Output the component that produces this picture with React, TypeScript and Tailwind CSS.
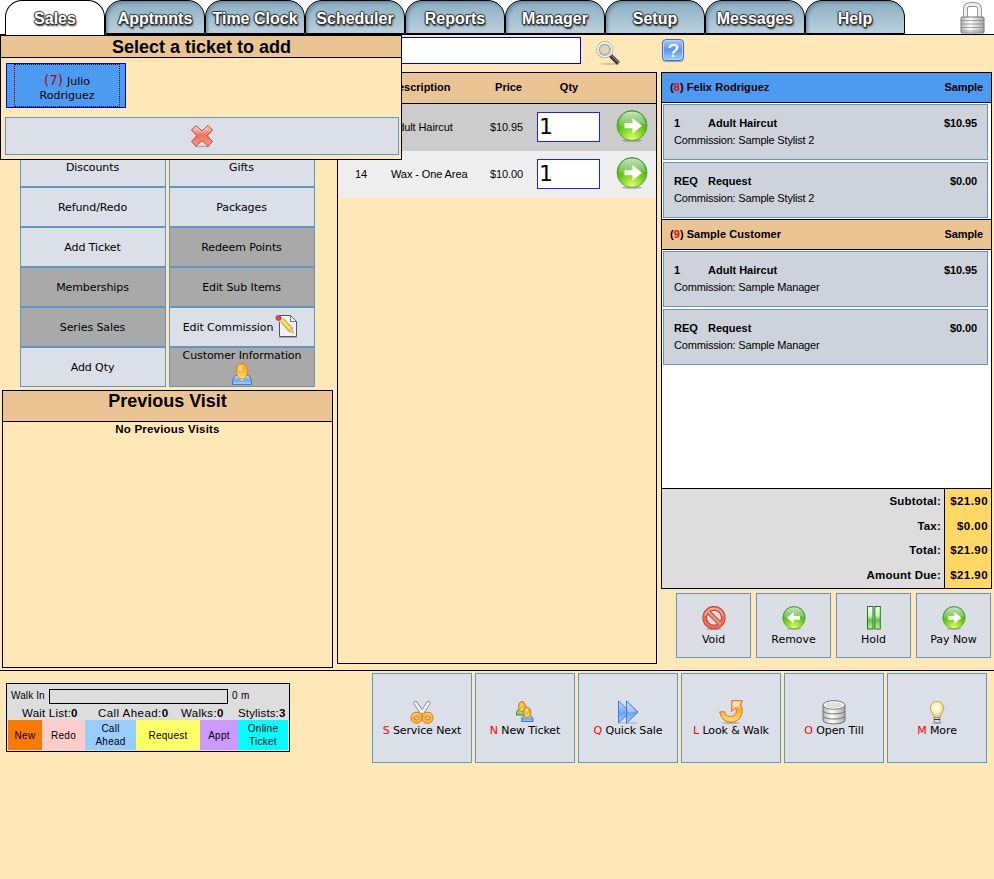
import React from "react";

const SANS = "font-['Liberation_Sans',Arial,sans-serif]";
const DEJA = "font-['DejaVu_Sans',Verdana,sans-serif]";

function Defs() {
  return (
    <svg width="0" height="0" className="absolute">
      <defs>
        <radialGradient id="green" cx="50%" cy="95%" r="85%">
          <stop offset="0" stopColor="#e2ff70" />
          <stop offset="0.45" stopColor="#7ed61f" />
          <stop offset="1" stopColor="#2f9a12" />
        </radialGradient>
        <linearGradient id="gloss" x1="0" y1="0" x2="0" y2="1">
          <stop offset="0" stopColor="#fff" stopOpacity="0.75" />
          <stop offset="1" stopColor="#fff" stopOpacity="0.15" />
        </linearGradient>
        <linearGradient id="red" x1="0" y1="0" x2="0" y2="1">
          <stop offset="0" stopColor="#fbd3c8" />
          <stop offset="0.5" stopColor="#f0705a" />
          <stop offset="1" stopColor="#f8a08c" />
        </linearGradient>
        <linearGradient id="orange" x1="0" y1="0" x2="0" y2="1">
          <stop offset="0" stopColor="#ff9d1c" />
          <stop offset="0.5" stopColor="#ffb52e" />
          <stop offset="1" stopColor="#ffe873" />
        </linearGradient>
        <linearGradient id="blue" x1="0" y1="0" x2="0" y2="1">
          <stop offset="0" stopColor="#cfe2ff" />
          <stop offset="0.55" stopColor="#6fa3f2" />
          <stop offset="1" stopColor="#a9d0ff" />
        </linearGradient>
        <linearGradient id="grey" x1="0" y1="0" x2="1" y2="0">
          <stop offset="0" stopColor="#b5b5b5" />
          <stop offset="0.4" stopColor="#ffffff" />
          <stop offset="1" stopColor="#a8a8a8" />
        </linearGradient>
        <linearGradient id="pausebar" x1="0" y1="0" x2="0" y2="1">
          <stop offset="0" stopColor="#f4fff0" />
          <stop offset="0.4" stopColor="#d2f2c0" />
          <stop offset="0.6" stopColor="#6cc448" />
          <stop offset="1" stopColor="#c2f080" />
        </linearGradient>
        <radialGradient id="bulb" cx="45%" cy="40%" r="60%">
          <stop offset="0" stopColor="#ffffff" />
          <stop offset="0.5" stopColor="#fdf0bc" />
          <stop offset="1" stopColor="#dfc06c" />
        </radialGradient>
      </defs>
    </svg>
  );
}

type IconProps = { className?: string };

function ArrowBall({ className = "size-6", left = false }: IconProps & { left?: boolean }) {
  return (
    <svg viewBox="0 0 32 32" className={className}>
      <ellipse cx="16" cy="30.5" rx="10" ry="1.3" fill="#000" opacity="0.25" />
      <circle cx="16" cy="15.5" r="15" fill="url(#green)" stroke="#4c9a35" strokeWidth="0.8" />
      <path d="M2.5 15C2.5 6 9 1.6 16 1.6S29.500 6 29.500 15C24 12.500 20 14 16 15S7 17.500 2.500 15Z" fill="url(#gloss)" />
      <path
        d="M8.500 13.300h8V8l9.500 7.800-9.500 7.900v-5.400h-8z"
        fill="#fff"
        transform={left ? "translate(32.5 0) scale(-1 1)" : undefined}
      />
    </svg>
  );
}

function CrossIcon() {
  return (
    <svg viewBox="0 0 24 24" className="size-6">
      <path d="M5 22.500h14" stroke="#777" strokeWidth="1.200" opacity="0.5" />
      <path d="M6 1.500 12 7l6-5.500L22.500 6 17.200 11.700 22.500 17.500 18 22.200 12 16.500 6 22.200 1.500 17.500 6.800 11.700 1.500 6z" fill="url(#red)" stroke="#c9402c" strokeWidth="1" strokeLinejoin="round" />
      <path d="M6 3 12 8.600 18 3" stroke="#fff" strokeWidth="0.8" fill="none" opacity="0.8" />
    </svg>
  );
}

function SearchIcon() {
  return (
    <svg viewBox="0 0 24 24" className="size-6">
      <ellipse cx="13" cy="23" rx="9" ry="0.9" fill="#000" opacity="0.15" />
      <path d="M14.500 14.500l8 8" stroke="#3c3c3c" strokeWidth="4" />
      <path d="M14.500 13.500l8.500 8.500" stroke="#999" strokeWidth="1" />
      <circle cx="8.700" cy="8.700" r="7" fill="#dcd6b8" stroke="#8c8c8c" strokeWidth="3" />
      <circle cx="8.700" cy="8.700" r="7" fill="none" stroke="#efefef" strokeWidth="2" />
      <circle cx="8.700" cy="8.700" r="5" fill="none" stroke="#a0a0a0" strokeWidth="0.800" />
    </svg>
  );
}

function HelpIcon() {
  return (
    <div className={`${SANS} flex h-[22px] w-[22px] items-center justify-center rounded-[4px] border border-[#4371cf] bg-linear-to-b from-[#a9c7fb] via-[#5d92f0] to-[#9bd0ff] text-[19px] leading-none text-white shadow-[inset_0_0_0_1px_#b5d3ff,0_1px_1px_#9b9b8b] [text-shadow:0.5px_0_0_#fff]`}>
      ?
    </div>
  );
}

function LockIcon() {
  return (
    <svg viewBox="0 0 25 32" className="h-8 w-[25px]">
      <path d="M5.500 16V7q0-4.500 4.500-4.500h4.500Q19.500 2.500 19.500 7v9" fill="none" stroke="#777" strokeWidth="4.500" />
      <path d="M5.500 16V7q0-4.500 4.500-4.500h4.500Q19.500 2.500 19.500 7v9" fill="none" stroke="#eee" strokeWidth="3" />
      <rect x="1" y="15" width="23" height="16" rx="1" fill="url(#grey)" stroke="#777" />
      <path d="M1.500 18.500h22M1.500 22h22M1.500 25.500h22M1.500 29h22" stroke="#777" strokeWidth="0.900" opacity="0.7" />
    </svg>
  );
}

function EditIcon() {
  return (
    <svg viewBox="0 0 24 26" className="h-[26px] w-6">
      <path d="M4.500 2.500h11l6 6v15h-17z" fill="#f2f2f2" stroke="#555" />
      <path d="M15.500 2.500v6h6z" fill="#fff" stroke="#555" strokeWidth="0.8" />
      <path d="M4 24.500h18" stroke="#888" opacity="0.6" />
      <path d="M5 8 8 5l9.500 10-3.500 3.500z" fill="#fcc52b" stroke="#b5862a" strokeWidth="0.7" />
      <path d="M6.500 6.500l9.500 10" stroke="#fff09a" strokeWidth="1.200" />
      <path d="M14 18.500l3.500-3.500 .8 5z" fill="#f5d6b8" stroke="#b08560" strokeWidth="0.6" />
      <path d="M4 8.500 8 4.800" stroke="#d8d8d8" strokeWidth="2" />
      <circle cx="3.500" cy="4.900" r="2.700" fill="#d84850" stroke="#a92a30" strokeWidth="0.5" />
    </svg>
  );
}

function PersonIcon() {
  return (
    <svg viewBox="0 0 22 24" className="h-6 w-[22px] shrink-0">
      <path d="M1.500 22.500Q1 14 6 13h10q5 1 4.500 9.500z" fill="url(#blue)" stroke="#3f78cc" />
      <path d="M6 14l5 5 5-5" fill="#dce9ff" />
      <ellipse cx="11" cy="9" rx="5.800" ry="7.900" fill="url(#orange)" stroke="#d98a14" />
      <ellipse cx="9.500" cy="6" rx="2.500" ry="3" fill="#fff" opacity="0.4" />
    </svg>
  );
}

function VoidIcon() {
  return (
    <svg viewBox="0 0 24 24" className="size-6">
      <ellipse cx="12" cy="23" rx="8" ry="0.900" fill="#000" opacity="0.25" />
      <circle cx="12" cy="11.700" r="9.300" fill="none" stroke="#b33420" strokeWidth="4.600" />
      <path d="M5.500 5.200l13 13" stroke="#b33420" strokeWidth="4.600" />
      <circle cx="12" cy="11.700" r="9.300" fill="none" stroke="#ee6a52" strokeWidth="3.200" />
      <path d="M5.500 5.200l13 13" stroke="#f28a76" strokeWidth="3.200" />
      <path d="M3 9.500A9.300 9.300 0 0 1 21 9.500" fill="none" stroke="#f9b9aa" strokeWidth="1.500" />
    </svg>
  );
}

function PauseIcon() {
  return (
    <svg viewBox="0 0 24 24" className="size-6">
      <rect x="5.500" y="0.500" width="5.500" height="22.500" fill="url(#pausebar)" stroke="#1f7a28" />
      <rect x="12.800" y="0.500" width="5.500" height="22.500" fill="url(#pausebar)" stroke="#1f7a28" />
    </svg>
  );
}

function ScissorsIcon() {
  return (
    <svg viewBox="0 0 24 24" className="size-6">
      <path d="M5.500 3 12.800 14M18.500 3 11.200 14" stroke="#888" strokeWidth="4.200" strokeLinecap="round" />
      <path d="M5.500 3 12.800 14M18.500 3 11.200 14" stroke="#f4f4f4" strokeWidth="2.600" strokeLinecap="round" />
      <rect x="1" y="12.300" width="11" height="11" rx="5" fill="#ffb240" stroke="#e08214" />
      <rect x="12" y="12.300" width="11" height="11" rx="5" fill="#ffb240" stroke="#e08214" />
      <path d="M3 15.500q3-3 6-1.500M15 14q3-1.500 6 1.500" stroke="#ffdc9c" strokeWidth="1.200" fill="none" />
      <ellipse cx="6.500" cy="18.300" rx="2.300" ry="1.500" fill="#dbdfe7" stroke="#d97a10" strokeWidth="0.900" />
      <ellipse cx="17.500" cy="18.300" rx="2.300" ry="1.500" fill="#dbdfe7" stroke="#d97a10" strokeWidth="0.900" />
      <circle cx="12" cy="13.500" r="1" fill="#999" />
    </svg>
  );
}

function PeopleIcon() {
  return (
    <svg viewBox="0 0 24 24" className="size-6">
      <path d="M3.500 15q-.5-5 3-5.500h6v5.500z" fill="#8cd860" stroke="#3a8f28" />
      <ellipse cx="9" cy="6.500" rx="3.500" ry="5" fill="url(#orange)" stroke="#cf7d14" />
      <path d="M8.500 21.500q-.5-5 3-6h5q4 1 3.500 6z" fill="url(#blue)" stroke="#3f6fd0" />
      <ellipse cx="14.200" cy="12.300" rx="3.600" ry="5.200" fill="url(#orange)" stroke="#cf7d14" />
      <ellipse cx="13.500" cy="10.300" rx="1.500" ry="2" fill="#fff" opacity="0.5" />
      <ellipse cx="8.500" cy="4.800" rx="1.500" ry="2" fill="#fff" opacity="0.4" />
    </svg>
  );
}

function ForwardIcon() {
  return (
    <svg viewBox="0 0 24 24" className="size-6">
      <path d="M3 23h18" stroke="#777" strokeWidth="1.200" opacity="0.4" />
      <path d="M2.500 1v22L14 12z" fill="url(#blue)" stroke="#3f78dc" strokeLinejoin="round" />
      <path d="M10.500 1v22L22 12z" fill="url(#blue)" stroke="#3f78dc" strokeLinejoin="round" />
      <path d="M11.500 3.500v8.500h9z" fill="#fff" opacity="0.3" />
    </svg>
  );
}

function ReturnIcon() {
  return (
    <svg viewBox="0 0 24 24" className="size-6">
      <ellipse cx="12" cy="23" rx="9" ry="0.900" fill="#000" opacity="0.2" />
      <path
        d="M12.700.6h11l-2.200 3.400Q24.500 9 22.800 14.500 20 22 12 22.200 3 22 .6 12l4.700-.4Q7 16.500 11.500 16.500 17 16 17.300 11.500 17.500 9.500 16.700 8l-4 3.500z"
        fill="url(#orange)"
        stroke="#e8671a"
        strokeWidth="0.900"
        strokeLinejoin="round"
      />
      <path d="M13.500 1.300h9l-2 3 1 3.500-4-1-4 3z" fill="#fff" opacity="0.65" />
    </svg>
  );
}

function DiscsIcon() {
  return (
    <svg viewBox="0 0 24 26" className="h-[26px] w-6">
      <g fill="url(#grey)" stroke="#6b6b6b" strokeWidth="0.900">
        <path d="M1 16v4.500c0 4.500 22 4.500 22 0V16z" />
        <path d="M1 11v4.700c0 4.500 22 4.500 22 0V11z" />
        <path d="M1 5.500v5c0 4.500 22 4.500 22 0v-5z" />
        <ellipse cx="12" cy="5" rx="11" ry="4.300" fill="#fafafa" />
      </g>
      <ellipse cx="12" cy="5.300" rx="8.500" ry="2.800" fill="#dedede" />
    </svg>
  );
}

function BulbIcon() {
  return (
    <svg viewBox="0 0 24 24" className="size-6">
      <ellipse cx="12" cy="23" rx="5" ry="0.900" fill="#000" opacity="0.25" />
      <path d="M12 1.500c-4 0-6.700 2.800-6.700 6.500 0 4 3 5.500 3.700 9.500h6c.7-4 3.700-5.500 3.700-9.500 0-3.700-2.700-6.500-6.700-6.500z" fill="url(#bulb)" stroke="#b9a35c" strokeWidth="0.900" />
      <path d="M9 17.500h6v4q-3 2.500-6 0z" fill="#eee" stroke="#777" strokeWidth="0.700" />
      <path d="M9 19.500h6" stroke="#333" strokeWidth="1.200" />
    </svg>
  );
}

const TABS = ["Sales", "Apptmnts", "Time Clock", "Scheduler", "Reports", "Manager", "Setup", "Messages", "Help"];

function Header() {
  return (
    <header className="flex h-[35px] border-b border-black bg-white pl-[5px]">
      {TABS.map((tab, i) => (
        <div
          key={tab}
          className={`${SANS} flex w-[100px] shrink-0 justify-center rounded-t-[17px] border border-black pt-[9px] text-[16px] leading-[17px] font-bold whitespace-nowrap text-white [text-shadow:0_-1px_1px_#333,-1px_0_1px_#333,1px_0_1px_#333,0_1px_1px_#222,1px_2px_2px_#222] ${
            i === 0
              ? "h-[35px] border-b-0 bg-white"
              : "h-[34px] bg-linear-to-b from-[#8aafc2] to-[#bbd0dd] shadow-[inset_2px_2px_3px_#55758a99]"
          }`}
        >
          {tab}
        </div>
      ))}
      <div className="ml-auto pt-[2px] pr-[9px]">
        <LockIcon />
      </div>
    </header>
  );
}

const ACTIONS: { label: string; off?: boolean; icon?: "edit" | "person" }[] = [
  { label: "Discounts" },
  { label: "Gifts" },
  { label: "Refund/Redo" },
  { label: "Packages" },
  { label: "Add Ticket" },
  { label: "Redeem Points", off: true },
  { label: "Memberships", off: true },
  { label: "Edit Sub Items", off: true },
  { label: "Series Sales", off: true },
  { label: "Edit Commission", icon: "edit" },
  { label: "Add Qty" },
  { label: "Customer Information", off: true, icon: "person" },
];

function LeftColumn() {
  return (
    <div className="ml-[2px] w-[331px] shrink-0 pt-[112px]">
      <div className={`${DEJA} ml-[18px] grid w-[295px] grid-cols-2 gap-x-[3px] text-[11px] tracking-[-0.09px]`}>
        {ACTIONS.map((a) => (
          <button
            key={a.label}
            className={`flex h-10 items-center justify-center border border-[#6096c0] whitespace-nowrap ${
              a.off ? "bg-[#a9a9a9]" : "bg-[#dbdfe7]"
            } ${a.icon === "person" ? "flex-col leading-[13px]" : a.icon === "edit" ? "pt-[2px] pr-[2px]" : "pt-[2px] pr-px"}`}
          >
            {a.label}
            {a.icon === "edit" && (
              <span className="mb-1 ml-[2px]">
                <EditIcon />
              </span>
            )}
            {a.icon === "person" && <PersonIcon />}
          </button>
        ))}
      </div>
      <section className={`${SANS} mt-[3px] h-[278px] border border-black text-center font-bold`}>
        <h2 className="h-[31px] border-b border-black bg-[#eac593] text-[18px] leading-[21px]">Previous Visit</h2>
        <p className="text-[11.500px] leading-[14px] tracking-[0.2px]">No Previous Visits</p>
      </section>
    </div>
  );
}

function ItemRow({ id, name, price, shade }: { id: string; name: string; price: string; shade: string }) {
  return (
    <div className={`flex h-[47px] items-center ${shade}`}>
      <span className="w-[46px] text-center">{id}</span>
      <span className="w-[92px] pl-[7px] tracking-[-0.1px] whitespace-nowrap">{name}</span>
      <span className="w-[61px] pr-[14px] text-right tracking-[-0.1px]">{price}</span>
      <span className={`${DEJA} mb-[2px] h-[30px] w-[63px] border border-[#2020ff] bg-white pl-px text-[22px] leading-[27px]`}>1</span>
      <ArrowBall className="mb-[4px] ml-4 size-8" />
    </div>
  );
}

function MiddleColumn() {
  return (
    <div className={`${SANS} ml-1 w-[320px] shrink-0 text-[11px]`}>
      <div className="flex h-[37px] items-start">
        <div className="mt-[2px] h-[27px] w-[244px] border border-[#0000f0] bg-white" />
        <div className="mt-[6px] ml-[15px]">
          <SearchIcon />
        </div>
      </div>
      <section className="h-[592px] border border-black">
        <div className="flex h-[31px] items-center border-b border-black bg-[#eac593] pb-px font-bold">
          <span className="w-[46px] text-center">ID</span>
          <span className="w-[92px] pl-[6px]">Description</span>
          <span className="w-[61px] pr-[15px] text-right">Price</span>
          <span className="w-[63px] pl-px text-center">Qty</span>
        </div>
        <ItemRow id="1" name="Adult Haircut" price="$10.95" shade="bg-[#ccc]" />
        <ItemRow id="14" name="Wax - One Area" price="$10.00" shade="bg-[#eee]" />
      </section>
    </div>
  );
}

function TicketHead({ num, name, shade }: { num: string; name: string; shade: string }) {
  return (
    <div className={`flex items-center justify-between border-b border-black pr-2 pl-2 font-bold ${shade}`}>
      <span className="tracking-[0.05px]">
        (<span className="text-[#f00]">{num}</span>) {name}
      </span>
      <span className="tracking-[-0.1px]">Sample</span>
    </div>
  );
}

function TicketLine({ code, name, price, by }: { code: string; name: string; price: string; by: string }) {
  return (
    <div className="mr-[3px] ml-px h-14 border border-[#6096c0] bg-[#ced3db] pt-[10px] pr-[10px] pl-[10px] leading-[17px]">
      <div className="flex font-bold">
        <span className="w-[34px]">{code}</span>
        <span>{name}</span>
        <span className="ml-auto tracking-[-0.1px]">{price}</span>
      </div>
      <div className="tracking-[-0.19px]">Commission: {by}</div>
    </div>
  );
}

const TOTALS = [
  ["Subtotal:", "$21.90"],
  ["Tax:", "$0.00"],
  ["Total:", "$21.90"],
  ["Amount Due:", "$21.90"],
];

function PayButton({ label, children }: { label: string; children: React.ReactNode }) {
  return (
    <button className={`${DEJA} flex h-[65px] w-[75px] flex-col items-center border border-[#6096c0] bg-[#dbdfe5] pt-3 text-[11px] leading-[20px] tracking-[-0.05px] whitespace-nowrap`}>
      {children}
      {label}
    </button>
  );
}

function RightColumn() {
  return (
    <div className={`${SANS} ml-1 w-[331px] shrink-0 text-[11px]`}>
      <div className="h-[37px] pt-1 pl-px">
        <HelpIcon />
      </div>
      <section className="flex h-[517px] flex-col border border-black bg-white">
        <TicketHead num="8" name="Felix Rodriguez" shade="h-[30px] bg-[#4b9bf0]" />
        <div className="flex flex-col gap-[2px] py-px">
          <TicketLine code="1" name="Adult Haircut" price="$10.95" by="Sample Stylist 2" />
          <TicketLine code="REQ" name="Request" price="$0.00" by="Sample Stylist 2" />
        </div>
        <TicketHead num="9" name="Sample Customer" shade="h-[31px] border-t bg-[#eac593]" />
        <div className="flex flex-col gap-[2px] py-px">
          <TicketLine code="1" name="Adult Haircut" price="$10.95" by="Sample Manager" />
          <TicketLine code="REQ" name="Request" price="$0.00" by="Sample Manager" />
        </div>
        <div className="mt-auto flex h-[100px] border-t border-black text-right text-[11.500px] leading-[24.600px] font-bold whitespace-nowrap">
          <div className="flex-1 bg-[#ddd] pr-[3px] tracking-[0.2px]">
            {TOTALS.map(([label]) => (
              <div key={label}>{label}</div>
            ))}
          </div>
          <div className="w-[47px] border-l border-black bg-[#ffd764] pr-[3px] tracking-[0.45px]">
            {TOTALS.map(([label, value]) => (
              <div key={label}>{value}</div>
            ))}
          </div>
        </div>
      </section>
      <div className="mt-1 ml-[15px] flex gap-[5px]">
        <PayButton label="Void"><VoidIcon /></PayButton>
        <PayButton label="Remove"><ArrowBall left /></PayButton>
        <PayButton label="Hold"><PauseIcon /></PayButton>
        <PayButton label="Pay Now"><ArrowBall /></PayButton>
      </div>
    </div>
  );
}

function TicketPopup() {
  return (
    <div className="absolute top-[35px] left-0 h-[125px] w-[402px] border border-black bg-[#ffe8b8]">
      <h2 className={`${SANS} h-[22px] border-b border-black bg-[#eac593] pl-px text-center text-[18px] leading-[22px] font-bold`}>
        Select a ticket to add
      </h2>
      <button className={`${DEJA} mt-[5px] ml-[5px] flex h-[45px] w-[120px] border border-[#0000f0] bg-[#4b9bf0] pl-[7px] text-[11px]`}>
        <span className="flex h-[43px] w-[106px] flex-col items-center border border-dotted border-black pt-[7px]">
          <span className="flex h-[17px] items-baseline gap-1 leading-4">
            <span className="text-[13.500px] text-[#b80018]">(7)</span>
            <span>Julio</span>
          </span>
          <span className="h-[14px] leading-[14px]">Rodriguez</span>
        </span>
      </button>
      <button className="mt-[9px] ml-1 flex h-[38px] w-[394px] items-center justify-center border border-[#6096c0] bg-[#dbdfe7]">
        <CrossIcon />
      </button>
    </div>
  );
}

const LEGEND = [
  ["New", "w-[34px] bg-[#fa7a00]"],
  ["Redo", "w-[43px] bg-[#fcc]"],
  ["Call Ahead", "w-[51px] bg-[#9cf] px-2"],
  ["Request", "w-[64px] bg-[#ff6]"],
  ["Appt", "w-[38px] bg-[#c9f]"],
  ["Online Ticket", "w-[50px] bg-[#0ff] px-2"],
];

function WaitPanel() {
  return (
    <section className={`${SANS} mt-3 ml-[6px] h-[69px] w-[284px] border border-black bg-[#ddd] px-px text-[10px]`}>
      <div className="flex h-[22px] items-center pt-[2px] pl-[3px]">
        <span className="w-[38px] pb-px tracking-[0.1px] whitespace-nowrap">Walk In</span>
        <span className="mr-1 h-[15px] w-[179px] border border-black" />
        <span className="pb-px tracking-[0.3px]">0 m</span>
      </div>
      <div className="flex h-[14px] pl-[14px] text-[11.500px] leading-[14px] whitespace-nowrap">
        <span className="w-[76px] tracking-[0.22px]">Wait List:<b>0</b></span>
        <span className="w-[83px] tracking-[0.45px]">Call Ahead:<b>0</b></span>
        <span className="w-[57px] tracking-[0.3px]">Walks:<b>0</b></span>
        <span className="tracking-[0.15px]">Stylists:<b>3</b></span>
      </div>
      <div className="flex h-[30px] leading-[13px] tracking-[0.25px]">
        {LEGEND.map(([label, look]) => (
          <div key={label} className={`flex shrink-0 items-center justify-center text-center ${look}`}>
            {label}
          </div>
        ))}
      </div>
    </section>
  );
}

const SHORTCUTS: [string, string, React.ReactNode][] = [
  ["S", "Service Next", <ScissorsIcon />],
  ["N", "New Ticket", <PeopleIcon />],
  ["Q", "Quick Sale", <ForwardIcon />],
  ["L", "Look & Walk", <ReturnIcon />],
  ["O", "Open Till", <DiscsIcon />],
  ["M", "More", <BulbIcon />],
];

function Footer() {
  return (
    <footer className="flex border-t border-black">
      <WaitPanel />
      <div className={`${DEJA} mt-[2px] ml-[82px] flex gap-[3px] text-[11px] leading-[14px] tracking-[-0.12px]`}>
        {SHORTCUTS.map(([key, label, icon]) => (
          <button key={key} className="flex h-[90px] w-[100px] flex-col items-center border border-[#6096c0] bg-[#dbdfe7] pt-[26px] whitespace-nowrap">
            <span className="flex h-[24px]">{icon}</span>
            <span>
              <span className="text-[#f00]">{key}</span> {label}
            </span>
          </button>
        ))}
      </div>
    </footer>
  );
}

export default function App() {
  return (
    <div className="relative h-[879px] w-[994px] overflow-hidden bg-[#ffe8b8] text-black">
      <Defs />
      <Header />
      <main className="flex h-[635px]">
        <LeftColumn />
        <MiddleColumn />
        <RightColumn />
      </main>
      <Footer />
      <TicketPopup />
    </div>
  );
}
